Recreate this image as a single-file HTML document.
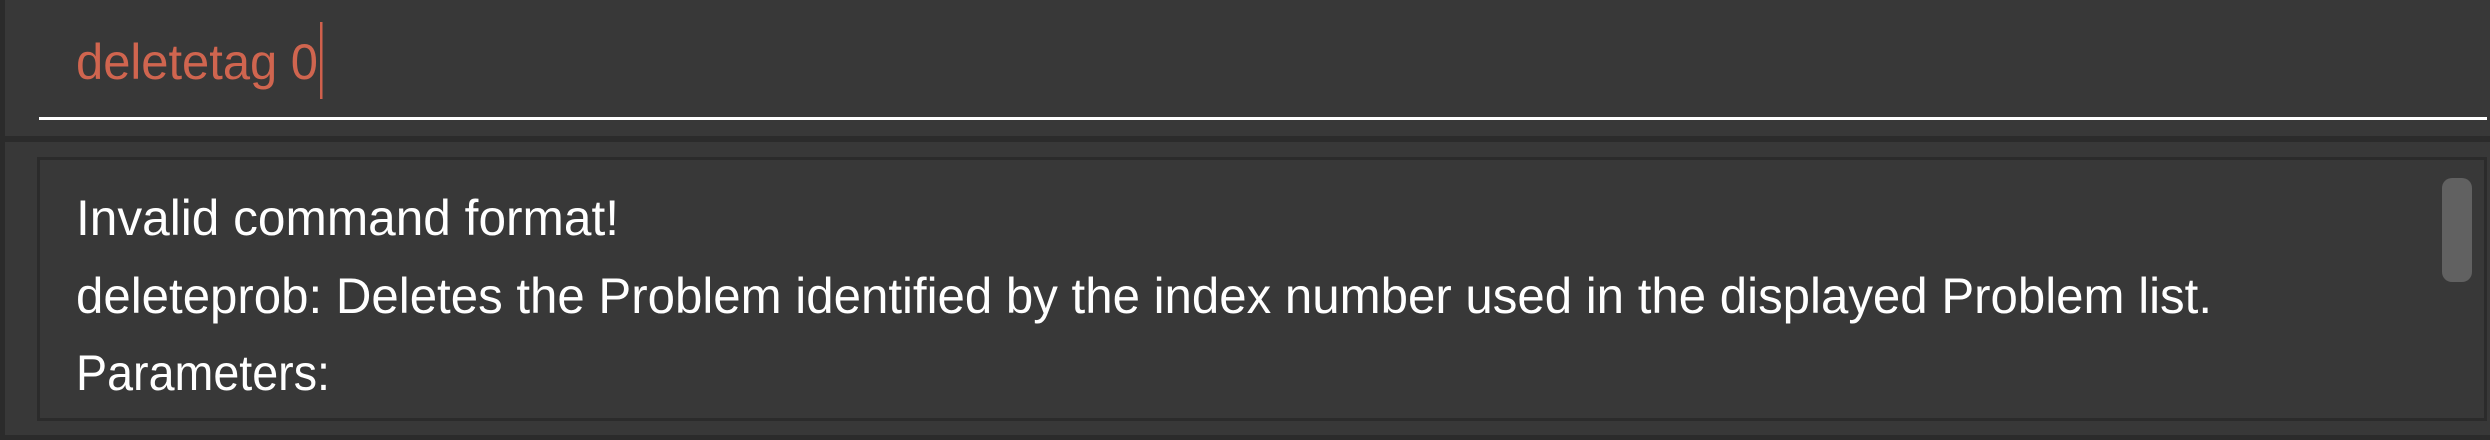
<!DOCTYPE html>
<html><head><style>
html,body{margin:0;padding:0;width:2490px;height:440px;overflow:hidden;background:#383838}
</style></head><body>
<svg width="2490" height="440" xmlns="http://www.w3.org/2000/svg" style="display:block">
<rect x="0" y="0" width="2490" height="440" fill="#383838"/>
<rect x="0" y="0" width="5" height="440" fill="#2b2b2b"/>
<rect x="0" y="136" width="2490" height="6" fill="#2b2b2b"/>
<rect x="0" y="435" width="2490" height="5" fill="#2b2b2b"/>
<rect x="39" y="117" width="2448" height="3" fill="#ffffff"/>
<text x="76" y="79" fill="#d0654f" font-family="Liberation Sans, sans-serif" font-size="50" textLength="242" lengthAdjust="spacingAndGlyphs">deletetag 0</text>
<rect x="320" y="22" width="2.5" height="77" fill="#d0604c"/>
<rect x="38.5" y="158.5" width="2447" height="261" fill="#383838" stroke="#2b2b2b" stroke-width="3"/>
<rect x="2442" y="178" width="30" height="104" rx="10" fill="#616161"/>
<g fill="#ffffff" font-family="Liberation Sans, sans-serif" font-size="50">
<text x="76" y="235" textLength="543" lengthAdjust="spacingAndGlyphs">Invalid command format!</text>
<text x="76" y="313" textLength="2136" lengthAdjust="spacingAndGlyphs">deleteprob: Deletes the Problem identified by the index number used in the displayed Problem list.</text>
<text x="76" y="390" textLength="254" lengthAdjust="spacingAndGlyphs">Parameters:</text>
</g>
</svg>
</body></html>
